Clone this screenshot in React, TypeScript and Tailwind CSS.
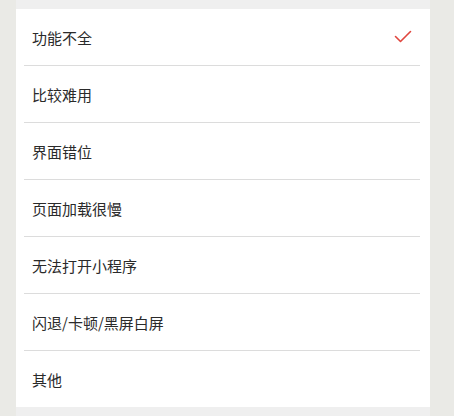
const reasons = [
  "功能不全",
  "比较难用",
  "界面错位",
  "页面加载很慢",
  "无法打开小程序",
  "闪退/卡顿/黑屏白屏",
  "其他",
];

export default function App() {
  const selected = 0;

  return (
    <div
      className="flex h-[416px] w-[454px] overflow-hidden bg-[#eaeae6]"
      style={{ fontFamily: '"Noto Sans CJK SC", "Noto Sans", sans-serif' }}
    >
      <div className="ml-4 flex w-[414px] flex-col bg-[#efefef] pt-[9px]">
        <ul className="bg-white">
          {reasons.map((reason, index) => (
            <li key={reason} className="ml-2 mr-[10px]">
              <div className="flex h-14 items-center justify-between px-2">
                <span className="text-[15px] leading-none text-[#2a2a2a]">{reason}</span>
                {index === selected ? (
                  <svg width="18" height="14" viewBox="0 0 18 14" fill="none">
                    <path d="M1.5 6.5 L6.5 11.5 L16.5 1.5" stroke="#e0463e" strokeWidth="1.6" strokeLinecap="round" strokeLinejoin="round" />
                  </svg>
                ) : null}
              </div>
              {index < reasons.length - 1 ? <div className="h-px bg-[#dcdcdc]" /> : null}
            </li>
          ))}
        </ul>
      </div>
    </div>
  );
}
